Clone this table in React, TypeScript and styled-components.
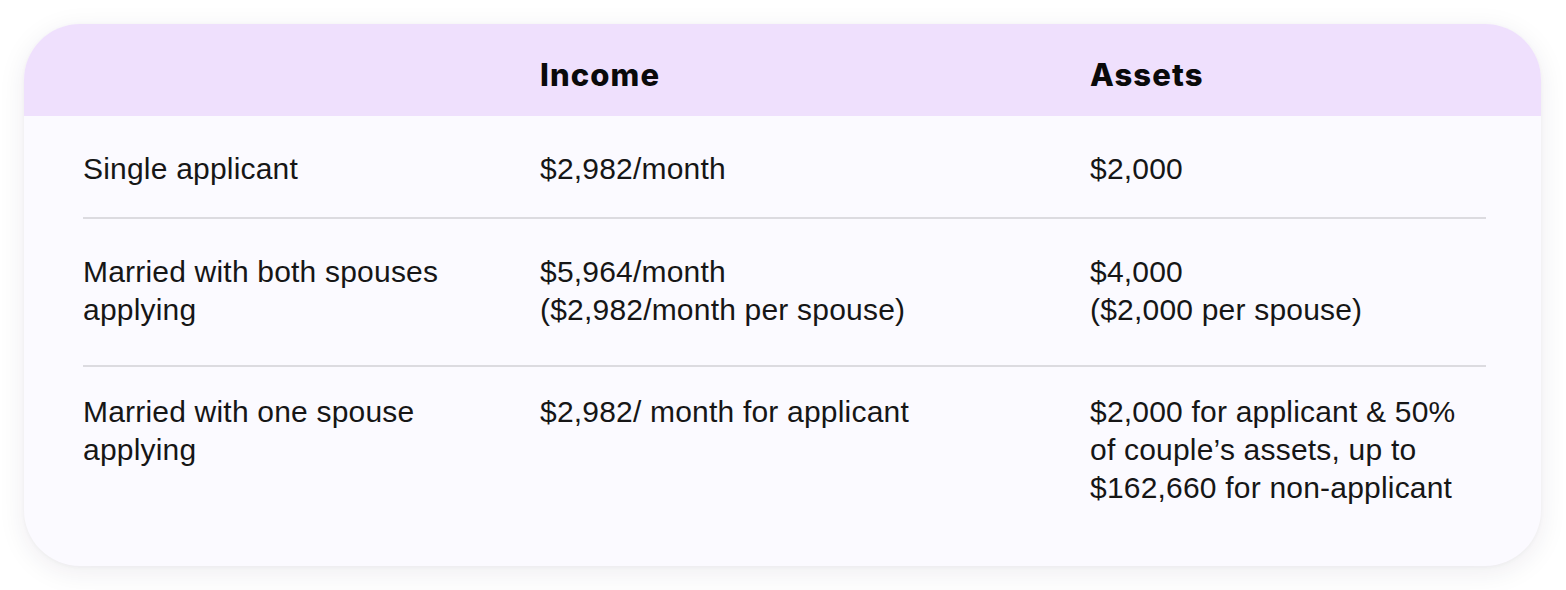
import React from "react";
import styled, { createGlobalStyle } from "styled-components";

const GlobalStyle = createGlobalStyle`
  html, body {
    margin: 0;
    padding: 0;
    background: #ffffff;
  }
  body {
    font-family: "Liberation Sans", Arial, sans-serif;
    -webkit-font-smoothing: antialiased;
  }
`;

const Page = styled.div`
  padding: 24px 25px 24px 24px;
  width: 1566px;
  box-sizing: border-box;
`;

const Card = styled.div`
  width: 1517px;
  border-radius: 56px;
  overflow: hidden;
  background: #fbfaff;
  box-shadow: 0 6px 28px rgba(40, 30, 60, 0.08), 0 1px 4px rgba(40, 30, 60, 0.04);
`;

const Grid = styled.div`
  display: grid;
  grid-template-columns: 457px 550px 1fr;
`;

const Header = styled(Grid)`
  background: #efe0fd;
  height: 92px;
  box-sizing: border-box;
  padding: 32px 55px 0 59px;
`;

const HeadCell = styled.div`
  font-family: Inter, "Noto Sans", sans-serif;
  font-weight: 800;
  font-size: 31px;
  line-height: 38px;
  letter-spacing: 1.1px;
  color: #0a0a0a;
`;

const Body = styled.div`
  padding: 0 55px 0 59px;
`;

const Row = styled(Grid)<{ $pt: number; $pb: number; $divider?: boolean }>`
  padding-top: ${(p) => p.$pt}px;
  padding-bottom: ${(p) => p.$pb}px;
  border-bottom: ${(p) => (p.$divider ? "2px solid #dcdbe0" : "none")};
`;

const Cell = styled.div`
  font-family: "Liberation Sans", Arial, sans-serif;
  font-size: 30px;
  line-height: 38px;
  letter-spacing: 0.2px;
  color: #161616;
  padding-right: 22px;
`;

const Line = styled.span`
  display: block;
`;

type RowData = {
  label: string;
  income: string[];
  assets: string[];
  pt: number;
  pb: number;
  divider: boolean;
};

const rows: RowData[] = [
  {
    label: "Single applicant",
    income: ["$2,982/month"],
    assets: ["$2,000"],
    pt: 34,
    pb: 29,
    divider: true,
  },
  {
    label: "Married with both spouses applying",
    income: ["$5,964/month", "($2,982/month per spouse)"],
    assets: ["$4,000", "($2,000 per spouse)"],
    pt: 34,
    pb: 36,
    divider: true,
  },
  {
    label: "Married with one spouse applying",
    income: ["$2,982/ month for applicant"],
    assets: [
      "$2,000 for applicant & 50% of couple\u2019s assets, up to $162,660 for non-applicant",
    ],
    pt: 26,
    pb: 59,
    divider: false,
  },
];

export default function App() {
  return (
    <>
      <GlobalStyle />
      <Page>
        <Card>
          <Header>
            <HeadCell />
            <HeadCell>Income</HeadCell>
            <HeadCell>Assets</HeadCell>
          </Header>
          <Body>
            {rows.map((r) => (
              <Row key={r.label} $pt={r.pt} $pb={r.pb} $divider={r.divider}>
                <Cell>{r.label}</Cell>
                <Cell>
                  {r.income.map((t) => (
                    <Line key={t}>{t}</Line>
                  ))}
                </Cell>
                <Cell>
                  {r.assets.map((t) => (
                    <Line key={t}>{t}</Line>
                  ))}
                </Cell>
              </Row>
            ))}
          </Body>
        </Card>
      </Page>
    </>
  );
}
